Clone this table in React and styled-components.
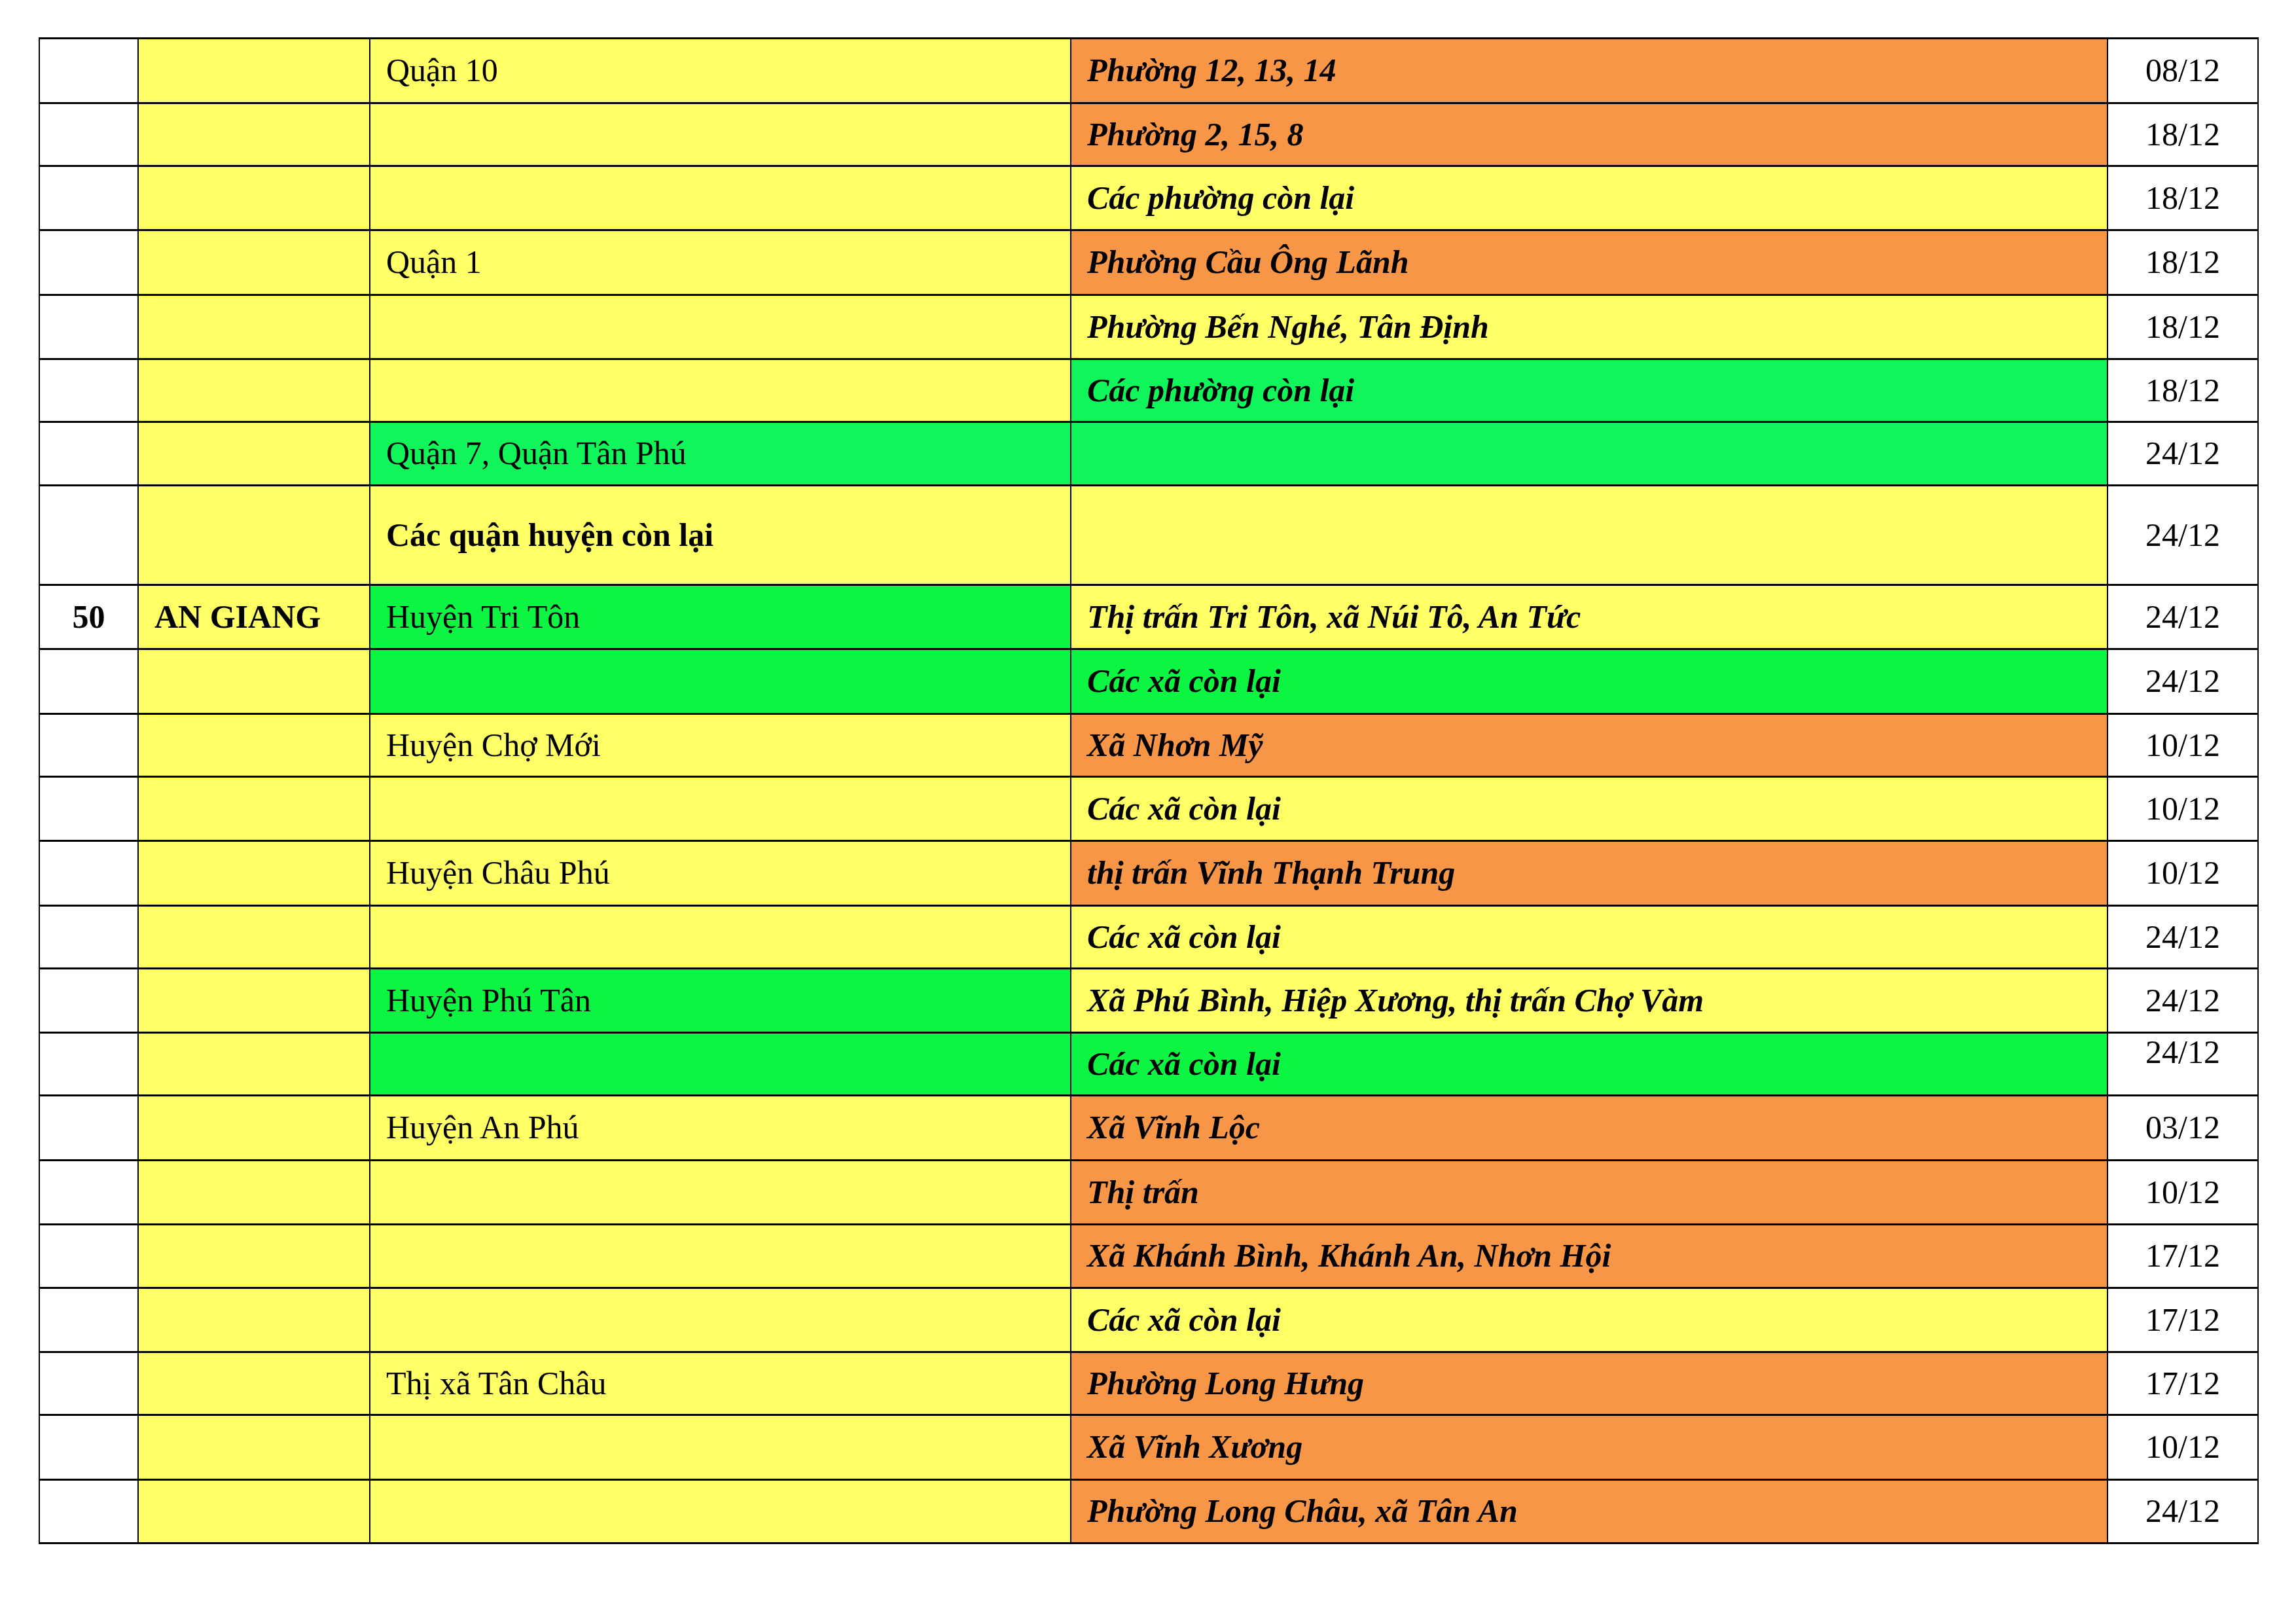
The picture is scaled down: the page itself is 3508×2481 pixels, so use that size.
import React from "react"
import styled, { createGlobalStyle } from "styled-components"

const GlobalStyle = createGlobalStyle`
  html, body {
    margin: 0;
    padding: 0;
    background: #ffffff;
  }
  body {
    font-family: "Liberation Serif", "Times New Roman", serif;
    color: #000000;
  }
`

const colors = {
    white: "#ffffff",
    yellow: "#ffff66",
    orange: "#f79646",
    green: "#10f55a",
    lime: "#0cf542",
}

const Page = styled.div`
    width: 3508px;
    height: 2481px;
    padding: 57px 0 0 59px;
    box-sizing: border-box;
`

const Sheet = styled.table`
    border-collapse: collapse;
    table-layout: fixed;
    width: 3390px;
    font-family: "Liberation Serif", "Times New Roman", serif;
    font-size: 50px;
    border-top: 2px solid #000;
    border-bottom: 3px solid #000;
`

const Col = styled.col`
    width: ${props => props.$w}px;
`

const Row = styled.tr`
    height: ${props => props.$h}px;
`

const Cell = styled.td`
    border-left: 2px solid #000;
    border-right: 2px solid #000;
    border-top: 3px solid #000;
    border-bottom: 3px solid #000;
    background: ${props => colors[props.$bg || "white"]};
    padding: 0 0 0 24px;
    vertical-align: middle;
    white-space: nowrap;
    overflow: hidden;
    line-height: 1.15;
    font-weight: ${props => (props.$bold ? 700 : 400)};
`

const NumCell = styled(Cell)`
    padding: 0;
    text-align: center;
    font-weight: 700;
`

const PlaceCell = styled(Cell)`
    font-style: italic;
    font-weight: 700;
`

const DateCell = styled(Cell)`
    padding: 0;
    text-align: center;
    vertical-align: ${props => (props.$top ? "top" : "middle")};
`

const columns = [151, 354, 1071, 1584, 230]

const rows = [
    { h: 99, dist: "Quận 10", dBg: "yellow", ward: "Phường 12, 13, 14", wBg: "orange", date: "08/12" },
    { h: 96, dist: "", dBg: "yellow", ward: "Phường 2, 15, 8", wBg: "orange", date: "18/12" },
    { h: 98, dist: "", dBg: "yellow", ward: "Các phường còn lại", wBg: "yellow", date: "18/12" },
    { h: 99, dist: "Quận 1", dBg: "yellow", ward: "Phường Cầu Ông Lãnh", wBg: "orange", date: "18/12" },
    { h: 98, dist: "", dBg: "yellow", ward: "Phường Bến Nghé, Tân Định", wBg: "yellow", date: "18/12" },
    { h: 96, dist: "", dBg: "yellow", ward: "Các phường còn lại", wBg: "green", date: "18/12" },
    { h: 97, dist: "Quận 7, Quận Tân Phú", dBg: "green", ward: "", wBg: "green", date: "24/12" },
    { h: 152, dist: "Các quận huyện còn lại", dBold: true, dBg: "yellow", ward: "", wBg: "yellow", date: "24/12" },
    { h: 98, no: "50", prov: "AN GIANG", dist: "Huyện Tri Tôn", dBg: "lime", ward: "Thị trấn Tri Tôn, xã Núi Tô, An Tức", wBg: "yellow", date: "24/12" },
    { h: 99, dist: "", dBg: "lime", ward: "Các xã còn lại", wBg: "lime", date: "24/12" },
    { h: 96, dist: "Huyện Chợ Mới", dBg: "yellow", ward: "Xã Nhơn Mỹ", wBg: "orange", date: "10/12" },
    { h: 98, dist: "", dBg: "yellow", ward: "Các xã còn lại", wBg: "yellow", date: "10/12" },
    { h: 99, dist: "Huyện Châu Phú", dBg: "yellow", ward: "thị trấn Vĩnh Thạnh Trung", wBg: "orange", date: "10/12" },
    { h: 96, dist: "", dBg: "yellow", ward: "Các xã còn lại", wBg: "yellow", date: "24/12" },
    { h: 98, dist: "Huyện Phú Tân", dBg: "lime", ward: "Xã Phú Bình, Hiệp Xương, thị trấn Chợ Vàm", wBg: "yellow", date: "24/12" },
    { h: 96, dist: "", dBg: "lime", ward: "Các xã còn lại", wBg: "lime", date: "24/12", top: true },
    { h: 99, dist: "Huyện An Phú", dBg: "yellow", ward: "Xã Vĩnh Lộc", wBg: "orange", date: "03/12" },
    { h: 98, dist: "", dBg: "yellow", ward: "Thị trấn", wBg: "orange", date: "10/12" },
    { h: 97, dist: "", dBg: "yellow", ward: "Xã Khánh Bình, Khánh An, Nhơn Hội", wBg: "orange", date: "17/12" },
    { h: 98, dist: "", dBg: "yellow", ward: "Các xã còn lại", wBg: "yellow", date: "17/12" },
    { h: 96, dist: "Thị xã Tân Châu", dBg: "yellow", ward: "Phường Long Hưng", wBg: "orange", date: "17/12" },
    { h: 99, dist: "", dBg: "yellow", ward: "Xã Vĩnh Xương", wBg: "orange", date: "10/12" },
    { h: 97, dist: "", dBg: "yellow", ward: "Phường Long Châu, xã Tân An", wBg: "orange", date: "24/12" },
]

export default function App() {
    return (
        <>
            <GlobalStyle />
            <Page>
                <Sheet>
                    <colgroup>
                        {columns.map((w, i) => (
                            <Col key={i} $w={w} />
                        ))}
                    </colgroup>
                    <tbody>
                        {rows.map((r, i) => (
                            <Row key={i} $h={r.h}>
                                <NumCell>{r.no}</NumCell>
                                <Cell $bg="yellow" $bold>{r.prov}</Cell>
                                <Cell $bg={r.dBg} $bold={r.dBold}>{r.dist}</Cell>
                                <PlaceCell $bg={r.wBg}>{r.ward}</PlaceCell>
                                <DateCell $top={r.top}>{r.date}</DateCell>
                            </Row>
                        ))}
                    </tbody>
                </Sheet>
            </Page>
        </>
    )
}
